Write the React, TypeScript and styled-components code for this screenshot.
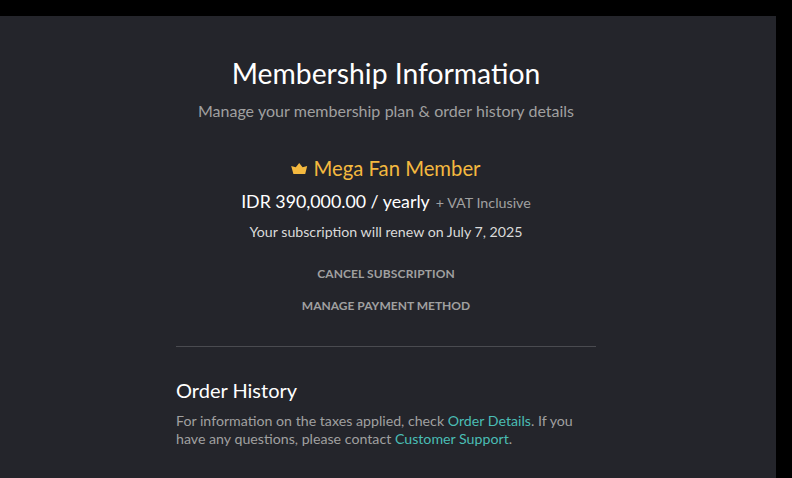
import React from "react";
import styled, { createGlobalStyle } from "styled-components";

const GlobalStyle = createGlobalStyle`
  * { box-sizing: border-box; }
  body { margin: 0; background: #000; font-family: Lato, sans-serif; overflow: hidden; }
`;
const Page = styled.main`
  width: 776px;
  height: 462px;
  margin-top: 16px;
  background: #24252b;
  display: flex;
  flex-direction: column;
  align-items: center;
  padding-right: 4px;
  padding-top: 39px;
`;
const Column = styled.div`
  width: 420px;
  display: flex;
  flex-direction: column;
  align-items: center;
`;
const Title = styled.h1`
  margin: 0;
  font-size: 28.3px;
  line-height: 36px;
  font-weight: 400;
  color: #fff;
`;
const Subtitle = styled.p`
  margin: 8px 0 0;
  font-size: 16px;
  line-height: 24px;
  word-spacing: 0.2px;
  color: #a0a0a0;
`;
const Plan = styled.div`
  display: flex;
  align-items: center;
  gap: 5px;
  margin-top: 31px;
  height: 28px;
  font-size: 20.3px;
  line-height: 28px;
  color: #f4b93f;
`;
const Crown = styled.svg`
  width: 17px;
  height: 11px;
  margin-top: 1px;
`;
const Price = styled.div`
  display: flex;
  align-items: baseline;
  gap: 6px;
  margin-top: 6px;
  font-size: 17.8px;
  line-height: 26px;
  color: #fff;
`;
const Vat = styled.span`
  font-size: 14.3px;
  color: #a0a0a0;
`;
const Renewal = styled.p`
  margin: 7px 0 0;
  font-size: 14.2px;
  line-height: 18px;
  color: #dadada;
`;
const Action = styled.button`
  margin: 0;
  padding: 0;
  border: 0;
  background: none;
  height: 32px;
  font: 700 12px/32px Lato, sans-serif;
  color: #a0a0a0;
  text-transform: uppercase;
`;
const CancelAction = styled(Action)`
  letter-spacing: 0.12px;
`;
const Actions = styled.div`
  display: flex;
  flex-direction: column;
  align-items: center;
  margin-top: 17px;
`;
const Orders = styled.section`
  width: 100%;
  margin-top: 24px;
  padding-top: 30px;
  border-top: 1px solid #4a4b50;
`;
const Heading = styled.h2`
  margin: 0;
  font-size: 20px;
  line-height: 26px;
  font-weight: 400;
  color: #fff;
`;
const Note = styled.p`
  margin: 9px 0 0;
  font-size: 14.2px;
  line-height: 18px;
  color: #a0a0a0;
`;
const Link = styled.a`
  color: #4abdb5;
`;

export default function App() {
  return (
    <>
      <GlobalStyle />
      <Page>
        <Column>
          <Title>Membership Information</Title>
          <Subtitle>Manage your membership plan &amp; order history details</Subtitle>
          <Plan>
            <Crown viewBox="0 0 17 11" fill="currentColor">
              <path d="M0.2 3 4.8 4.2 8.2 0 11.6 4.2 16.2 3 14.2 11H2.4Z" />
            </Crown>
            <span>Mega Fan Member</span>
          </Plan>
          <Price>
            <span>IDR 390,000.00 / yearly</span>
            <Vat>+ VAT Inclusive</Vat>
          </Price>
          <Renewal>Your subscription will renew on July 7, 2025</Renewal>
          <Actions>
            <CancelAction>Cancel subscription</CancelAction>
            <Action>Manage payment method</Action>
          </Actions>
          <Orders>
            <Heading>Order History</Heading>
            <Note>
              For information on the taxes applied, check <Link>Order Details</Link>. If you
              <br />
              have any questions, please contact <Link>Customer Support</Link>.
            </Note>
          </Orders>
        </Column>
      </Page>
    </>
  );
}
